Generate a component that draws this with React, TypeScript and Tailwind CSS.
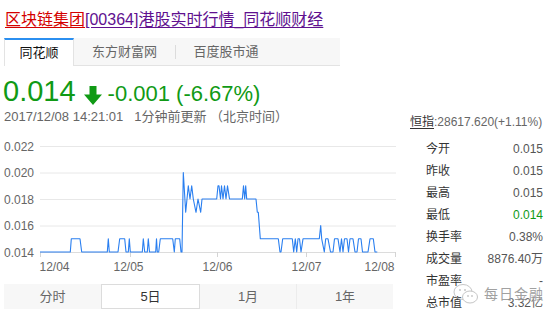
import React from 'react';

const FONT = "font-['Liberation_Sans','Noto_Sans_CJK_SC',sans-serif]";

// price level (in 0.001 units) -> page y
const py = (v: number) => 252 - (v - 14) * 13.25;

const line: [number, number][] = [
  [40, 14], [70.3, 14], [71.3, 15], [80, 15], [81.7, 14], [107.3, 14], [108.3, 15], [109.3, 14],
  [118, 14], [119.7, 15], [124.7, 15], [126, 14], [128.3, 14], [129.3, 15], [130.3, 14],
  [142.3, 14], [143.3, 15], [144.7, 14], [147.3, 14], [148.3, 15], [149.5, 14],
  [155.7, 14], [156.5, 15], [157.3, 14], [158.7, 14], [160.3, 15], [172.7, 15], [174.3, 14],
  [175.3, 15], [179.7, 15], [181, 14], [182, 14], [183.3, 20], [185.7, 17], [188.3, 19],
  [190, 18], [191.7, 19], [193.3, 18], [196, 17], [198, 18], [200.7, 17], [202, 18],
  [216.7, 18], [218, 19], [219, 19], [220.5, 18], [221.5, 19], [223, 18], [224.5, 19],
  [226, 18], [227.5, 19], [229.5, 18], [242.3, 18], [243.5, 19], [244.7, 18], [245.7, 19],
  [246.7, 18], [256, 18], [257.3, 17], [258.3, 17], [260.3, 15], [278.3, 15], [280, 14],
  [281, 14], [282.7, 15], [292.3, 15], [293.7, 14], [295.3, 15], [296.7, 14], [298, 15],
  [299.5, 15], [301, 14], [303, 15], [319.3, 15], [320.7, 16], [321.7, 15], [324.3, 14],
  [325.7, 15], [328, 15], [330.5, 14], [333, 14], [334.5, 15], [338, 15], [340, 14],
  [341.5, 15], [343, 14], [344.5, 15], [347, 15], [348.5, 14], [350, 15], [353, 15],
  [355, 14], [357, 14], [358.5, 15], [361, 15], [362.5, 14], [368, 14], [370, 15],
  [373.3, 15], [375, 14], [377.3, 14],
];

const stats: { label: string; value: string; green?: boolean }[] = [
  { label: '今开', value: '0.015' },
  { label: '昨收', value: '0.015' },
  { label: '最高', value: '0.015' },
  { label: '最低', value: '0.014', green: true },
  { label: '换手率', value: '0.38%' },
  { label: '成交量', value: '8876.40万' },
  { label: '市盈率', value: '-' },
  { label: '总市值', value: '3.32亿' },
];

const Chart = () => {
  const grid = [
    { v: 22, t: '0.022' },
    { v: 20, t: '0.020' },
    { v: 18, t: '0.018' },
    { v: 16, t: '0.016' },
    { v: 14, t: '0.014' },
  ];
  const days = [
    { x: 54.5, t: '12/04' },
    { x: 128.5, t: '12/05' },
    { x: 217.5, t: '12/06' },
    { x: 306.5, t: '12/07' },
    { x: 379.5, t: '12/08' },
  ];
  const d = line.map(([x, v], i) => `${i ? 'L' : 'M'}${x} ${py(v).toFixed(1)}`).join(' ');
  return (
    <svg width="400" height="150" viewBox="0 125 400 150" className="block" fontFamily="'Liberation Sans', sans-serif">
      {grid.map((g) => (
        <g key={g.t}>
          <line x1="40" x2="396" y1={py(g.v) + 0.5} y2={py(g.v) + 0.5} stroke={g.v === 14 ? '#dcdcdc' : '#e8e8e8'} />
          <text x="4" y={py(g.v) + 4.5} fontSize="12" fill="#666">{g.t}</text>
        </g>
      ))}
      {[40, 130, 217, 306, 395].map((x) => (
        <line key={x} x1={x + 0.5} x2={x + 0.5} y1="252" y2="257" stroke="#d4d4d4" />
      ))}
      {days.map((dd) => (
        <text key={dd.t} x={dd.x} y="271" fontSize="12" fill="#666" textAnchor="middle">{dd.t}</text>
      ))}
      <path d={d} fill="none" stroke="#2a7ff0" strokeWidth="1.1" strokeLinejoin="round" />
    </svg>
  );
};

export default function App() {
  return (
    <div className={`relative w-[550px] h-[320px] overflow-hidden bg-white ${FONT}`}>
      {/* page title */}
      <div className="pl-[5px] pt-[11px] h-[30px] text-[16px] leading-[18px] whitespace-nowrap">
        <span className="text-[#d40000] underline underline-offset-2">区块链集团</span>
        <span className="text-[#60108f] underline underline-offset-2">[00364]港股实时行情_同花顺财经</span>
      </div>

      {/* source tabs */}
      <div className="ml-[4px] mt-[8px] w-[336px] h-[28px] flex bg-[#f7f7f7] border-b border-[#e3e3e3] text-[13px]">
        <div className="w-[70px] bg-white border-t-2 border-[#2b8ff0] border-l border-l-[#e3e3e3] border-r border-r-[#e3e3e3] -mb-px flex items-center justify-center text-[#111]">
          同花顺
        </div>
        <div className="w-[101px] flex items-center justify-center text-[#666]">东方财富网</div>
        <div className="w-px h-[14px] self-center bg-[#dcdcdc]" />
        <div className="w-[100px] flex items-center justify-center text-[#666]">百度股市通</div>
      </div>

      <div className="flex">
        {/* left: quote + chart */}
        <div className="w-[400px] shrink-0">
          <div className="mt-[11px] pl-[3px] h-[29px] flex items-baseline text-[#109a15]">
            <span className="text-[29px] leading-[29px]">0.014</span>
            <svg width="18" height="19" viewBox="0 0 18 19" className="ml-[8px] self-end mb-[1px]">
              <path d="M5.5 0 H12.5 V8.5 H18 L9 19 L0 8.5 H5.5 Z" fill="#109a15" />
            </svg>
            <span className="ml-[6px] text-[22px] leading-[22px]">-0.001 (-6.67%)</span>
          </div>
          <div className="mt-[3px] pl-[4px] h-[16px] text-[13px] leading-[16px] text-[#666] whitespace-nowrap">
            <span>2017/12/08 14:21:01</span>
            <span className="ml-[11px]">1分钟前更新 （北京时间）</span>
          </div>
          <Chart />
          <div className="mt-[9px] ml-[4px] w-[389px] h-[25px] flex bg-[#f7f7f7] text-[13px] text-[#666]">
            <div className="w-[97px] flex items-center justify-center">分时</div>
            <div className="w-[99px] flex items-center justify-center bg-white border border-[#dcdcdc] text-[#333]">5日</div>
            <div className="w-[96px] flex items-center justify-center">1月</div>
            <div className="w-[97px] flex items-center justify-center border-l border-[#ececec]">1年</div>
          </div>
        </div>

        {/* right: index + stats */}
        <div className="ml-[10px] w-[133px] pt-[48px] text-[12px]">
          <div className="h-[16px] leading-[16px] whitespace-nowrap text-[#666]">
            <span className="text-[#333] underline underline-offset-2">恒指</span>:28617.620(+1.11%)
          </div>
          <div className="mt-[8px] pl-[16px]">
            {stats.map((s) => (
              <div key={s.label} className="h-[22px] flex items-center justify-between">
                <span className="text-[#333]">{s.label}</span>
                <span className={s.green ? 'text-[#109a15]' : 'text-[#555]'}>{s.value}</span>
              </div>
            ))}
          </div>
        </div>
      </div>

      {/* wechat watermark */}
      <div className="absolute left-[452px] top-[282px] flex items-center gap-[4px] opacity-80">
        <svg width="28" height="24" viewBox="0 0 28 24">
          <ellipse cx="11" cy="10" rx="9" ry="7.5" fill="none" stroke="#b8b8b8" strokeWidth="1" />
          <ellipse cx="18" cy="15" rx="7.5" ry="6" fill="white" stroke="#b8b8b8" strokeWidth="1" />
          <circle cx="8" cy="8" r="1" fill="#b8b8b8" />
          <circle cx="13" cy="8" r="1" fill="#b8b8b8" />
          <circle cx="16" cy="14" r="0.9" fill="#b8b8b8" />
          <circle cx="20" cy="14" r="0.9" fill="#b8b8b8" />
        </svg>
        <span className="text-[14px] text-[#8a8a8a] tracking-[1px] [text-shadow:0_0_2px_#fff,0_0_2px_#fff]">每日金融</span>
      </div>
    </div>
  );
}
